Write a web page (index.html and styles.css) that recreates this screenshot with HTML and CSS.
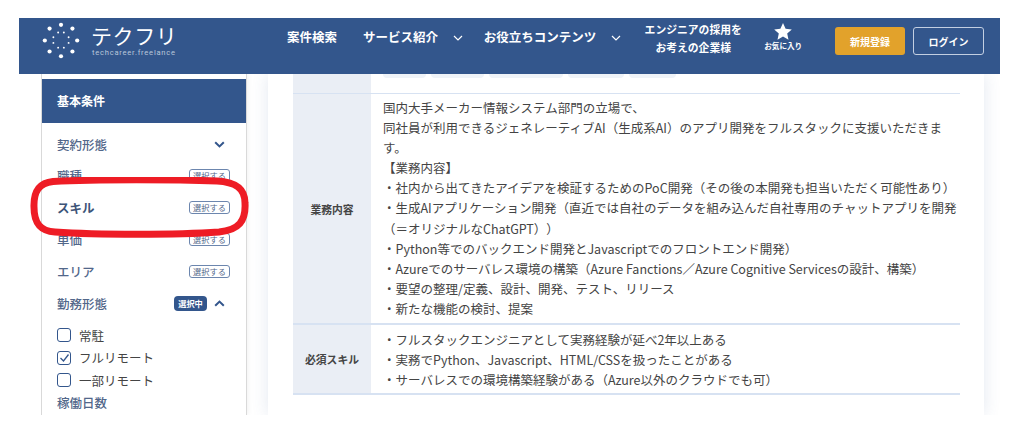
FILE: index.html
```html
<!DOCTYPE html>
<html lang="ja">

<head>
  <meta charset="utf-8">
  <title>テクフリ</title>
  <link rel="stylesheet" href="styles.css">
</head>

<body>
  <div class="page">
    <div class="header">
      <div class="logo">
        <svg class="logo-mark" width="40" height="40" viewBox="40 21 42 42" fill="#fff">
          <circle cx="61" cy="25" r="2.2"/><circle cx="49" cy="29" r="2.2"/><circle cx="73" cy="29" r="2.2"/>
          <circle cx="44" cy="41.5" r="2.2"/><circle cx="78" cy="41.5" r="2.2"/><circle cx="49" cy="53" r="2.2"/>
          <circle cx="73" cy="53" r="2.2"/><circle cx="61" cy="58" r="2.2"/>
          <circle cx="58" cy="33" r="1"/><circle cx="64" cy="33" r="1"/><circle cx="53" cy="38" r="1"/>
          <circle cx="69" cy="38" r="1"/><circle cx="53" cy="44" r="1"/><circle cx="69" cy="44" r="1"/>
          <circle cx="58" cy="49" r="1"/><circle cx="64" cy="49" r="1"/>
        </svg>
        <div class="logo-text">
          <div class="logo-name">テクフリ</div>
          <div class="logo-sub">techcareer.freelance</div>
        </div>
      </div>
      <div class="nav">
        <a class="nav-item" href="#">案件検索</a>
        <a class="nav-item has-sub" href="#">サービス紹介
          <svg width="10" height="6" viewBox="0 0 10 6"><path d="M1 1l4 4 4-4" fill="none" stroke="#fff" stroke-width="1.2"/></svg>
        </a>
        <a class="nav-item has-sub" href="#">お役立ちコンテンツ
          <svg width="10" height="6" viewBox="0 0 10 6"><path d="M1 1l4 4 4-4" fill="none" stroke="#fff" stroke-width="1.2"/></svg>
        </a>
        <a class="nav-company" href="#">エンジニアの採用を<br>お考えの企業様</a>
        <a class="nav-fav" href="#">
          <svg width="18" height="17" viewBox="0 0 18 17"><path d="M9 0l2.6 5.7 6.2.7-4.6 4.2 1.3 6.1L9 13.6l-5.5 3.1 1.3-6.1L.2 6.4l6.2-.7z" fill="#fff"/></svg>
          <span>お気に入り</span>
        </a>
      </div>
      <a class="btn btn-signup" href="#">新規登録</a>
      <a class="btn btn-login" href="#">ログイン</a>
    </div>

    <div class="content">
      <div class="sidebar">
        <div class="side-title">基本条件</div>
        <div class="side-row row-contract">
          <span class="side-label">契約形態</span>
          <svg class="chev" width="11" height="7" viewBox="0 0 11 7"><path d="M1.2 1.2l4.3 4.2 4.3-4.2" fill="none" stroke="#33568c" stroke-width="2"/></svg>
        </div>
        <div class="side-row"><span class="side-label">職種</span><span class="pick">選択する</span></div>
        <div class="side-row"><span class="side-label strong">スキル</span><span class="pick">選択する</span></div>
        <div class="side-row"><span class="side-label">単価</span><span class="pick">選択する</span></div>
        <div class="side-row"><span class="side-label">エリア</span><span class="pick">選択する</span></div>
        <div class="side-row row-style">
          <span class="side-label">勤務形態</span>
          <span class="picked">選択中</span>
          <svg class="chev" width="11" height="7" viewBox="0 0 11 7"><path d="M1.2 5.8l4.3-4.2 4.3 4.2" fill="none" stroke="#33568c" stroke-width="2"/></svg>
        </div>
        <div class="checks">
          <label class="check"><span class="box"></span>常駐</label>
          <label class="check"><span class="box">
            <svg width="11" height="10" viewBox="0 0 11 10"><path d="M1.5 5l3 3 5-6.5" fill="none" stroke="#33568c" stroke-width="1.3"/></svg>
          </span>フルリモート</label>
          <label class="check"><span class="box"></span>一部リモート</label>
        </div>
        <div class="side-label side-days">稼働日数</div>
      </div>

      <div class="main">
        <div class="table">
          <div class="row row-chips">
            <div class="th"></div>
            <div class="td chips">
              <span class="chip chip-a"></span>
              <span class="chip chip-b"></span>
              <span class="chip chip-c"></span>
              <span class="chip chip-d"></span>
              <span class="chip chip-e"></span>
            </div>
          </div>
          <div class="row row-desc">
            <div class="th">業務内容</div>
            <div class="td">
              国内大手メーカー情報システム部門の立場で、<br>
              同社員が利用できるジェネレーティブAI（生成系AI）のアプリ開発をフルスタックに支援いただきま<br>
              す。<br>
              【業務内容】<br>
              ・社内から出てきたアイデアを検証するためのPoC開発（その後の本開発も担当いただく可能性あり）<br>
              ・生成AIアプリケーション開発（直近では自社のデータを組み込んだ自社専用のチャットアプリを開発<br>
              （＝オリジナルなChatGPT））<br>
              ・Python等でのバックエンド開発とJavascriptでのフロントエンド開発）<br>
              ・Azureでのサーバレス環境の構築（Azure Fanctions／Azure Cognitive Servicesの設計、構築）<br>
              ・要望の整理/定義、設計、開発、テスト、リリース<br>
              ・新たな機能の検討、提案
            </div>
          </div>
          <div class="row row-skill">
            <div class="th">必須スキル</div>
            <div class="td">
              ・フルスタックエンジニアとして実務経験が延べ2年以上ある<br>
              ・実務でPython、Javascript、HTML/CSSを扱ったことがある<br>
              ・サーバレスでの環境構築経験がある（Azure以外のクラウドでも可）
            </div>
          </div>
        </div>
      </div>
    </div>

    <svg class="marker" width="226" height="64" viewBox="0 0 226 64">
      <path d="M26 4.5C70 2 150 2.5 190 4C208 5 218 11 218 26C219 44 212 53 192 55C150 58 70 58 28 55C13 54 7 46 7 30C6.5 14 12 6 26 4.5Z" fill="none" stroke="#ee1c25" stroke-width="7"/>
    </svg>
  </div>
</body>

</html>
```

FILE: styles.css
```css
* {
  box-sizing: border-box;
}

html,
body {
  margin: 0;
  padding: 0;
  background-color: #ffffff;
}

body {
  font-family: "Noto Sans CJK JP", "Noto Sans", sans-serif;
  color: #444;
  font-size: 12.5px;
  text-spacing-trim: space-all;
}

a {
  color: #fff;
  text-decoration: none;
}

.page {
  position: relative;
  width: 1024px;
  height: 428px;
  padding-top: 18px;
  overflow: hidden;
}

.header {
  position: relative;
  z-index: 2;
  display: flex;
  align-items: flex-start;
  width: 981px;
  height: 56px;
  margin-left: 19px;
  background-color: #33568c;
}

.logo {
  display: flex;
  width: 268px;
  padding: 3px 0 0 22px;
}

.logo-mark {
  flex: none;
}

.logo-text {
  margin-left: 10px;
  padding-top: 1px;
  color: #fff;
}

.logo-name {
  font-size: 21px;
  font-weight: 400;
  line-height: 26px;
  letter-spacing: 0.6px;
}

.logo-sub {
  padding-left: 1px;
  font-family: "Roboto", sans-serif;
  font-size: 7.6px;
  line-height: 10px;
  letter-spacing: 0.75px;
  color: #b9c6da;
}

.nav {
  display: flex;
  align-items: flex-start;
  width: 548px;
}

.nav-item {
  padding-top: 10px;
  margin-right: 26px;
  font-size: 12.5px;
  font-weight: 700;
  line-height: 18px;
  white-space: nowrap;
}

.has-sub {
  margin-right: 21px;
}

.nav-item svg {
  margin-left: 12px;
  vertical-align: 1px;
}

.nav-company {
  width: 100px;
  margin-left: 1px;
  padding-top: 2px;
  font-size: 10.8px;
  font-weight: 700;
  line-height: 18px;
  text-align: center;
  white-space: nowrap;
}

.nav-fav {
  display: flex;
  flex-direction: column;
  align-items: center;
  width: 40px;
  margin-left: 20px;
  padding-top: 5px;
  font-size: 7.6px;
  font-weight: 700;
  white-space: nowrap;
}

.nav-fav span {
  line-height: 11px;
}

.btn {
  display: flex;
  align-items: center;
  justify-content: center;
  height: 28px;
  margin-top: 9px;
  border-radius: 3px;
  font-size: 10px;
  font-weight: 700;
}

.btn-signup {
  width: 70px;
  background-color: #e2a22b;
}

.btn-login {
  width: 71px;
  margin-left: 8px;
  border: 1px solid #c3cfe2;
}

.content {
  display: flex;
  height: 341px;
  margin-left: 41px;
  overflow: hidden;
}

.sidebar {
  flex: none;
  width: 206px;
  padding-top: 5px;
  border-left: 1px solid #d9d9d9;
  border-right: 1px solid #d9d9d9;
  background-color: #fff;
  box-shadow: 0 0 6px rgba(0, 0, 0, 0.08);
}

.side-title {
  height: 44px;
  padding-left: 15px;
  background-color: #33568c;
  color: #fff;
  font-size: 12px;
  font-weight: 700;
  line-height: 44px;
}

.side-row {
  display: flex;
  align-items: center;
  justify-content: space-between;
  height: 31.8px;
  padding: 0 16px 0 15px;
}

.row-contract {
  height: 32px;
  margin-top: 5px;
  padding-right: 21px;
}

.row-style {
  justify-content: flex-start;
  padding-right: 21px;
}

.side-label {
  color: #52678a;
  font-size: 12.5px;
  font-weight: 500;
}

.strong {
  color: #3d5478;
  font-weight: 700;
}

.pick {
  height: 13px;
  width: 41px;
  border: 1px solid #6c86ae;
  border-radius: 3px;
  color: #52678a;
  font-size: 8.2px;
  line-height: 11px;
  text-align: center;
}

.picked {
  width: 33px;
  height: 15px;
  margin-left: auto;
  margin-right: 7px;
  border-radius: 4px;
  background-color: #33568c;
  color: #fff;
  font-size: 8.2px;
  font-weight: 700;
  line-height: 15px;
  text-align: center;
}

.checks {
  padding: 5px 0 0 15px;
}

.check {
  display: flex;
  align-items: center;
  height: 22.5px;
  color: #444;
  font-size: 12.5px;
}

.box {
  display: flex;
  align-items: center;
  justify-content: center;
  width: 14px;
  height: 14px;
  margin-right: 8px;
  border: 1.5px solid #33568c;
  border-radius: 3px;
}

.side-days {
  padding: 2px 0 0 15px;
}

.main {
  flex: none;
  width: 716px;
  margin-left: 21px;
  padding: 0 24px 0 25px;
  background-color: #fff;
  box-shadow: 0 0 16px rgba(60, 90, 150, 0.14);
}

.row {
  display: flex;
  border-bottom: 2px solid #d7e2f2;
}

.th {
  display: flex;
  flex: none;
  align-items: center;
  justify-content: center;
  width: 78px;
  background-color: #eaeef5;
  color: #444;
  font-size: 10.8px;
  font-weight: 700;
}

.td {
  padding-left: 12px;
  line-height: 20.1px;
  white-space: nowrap;
}

.row-chips {
  height: 20px;
  border-bottom-width: 1px;
}

.chips {
  display: flex;
  gap: 5px;
  align-items: flex-start;
}

.chip {
  height: 4px;
  border-radius: 0 0 4px 4px;
  background-color: #eff3f8;
}

.chip-a { width: 43px; }
.chip-b { width: 53px; }
.chip-c { width: 74px; }
.chip-d { width: 56px; }
.chip-e { width: 47px; }

.row-desc {
  height: 231px;
}

.row-desc .td {
  padding-top: 4px;
}

.row-skill {
  height: 70px;
}

.row-skill .td {
  padding-top: 5px;
}

/* red hand drawn mark over the sidebar */
.marker {
  position: absolute;
  left: 27px;
  top: 177px;
  z-index: 3;
}
```
